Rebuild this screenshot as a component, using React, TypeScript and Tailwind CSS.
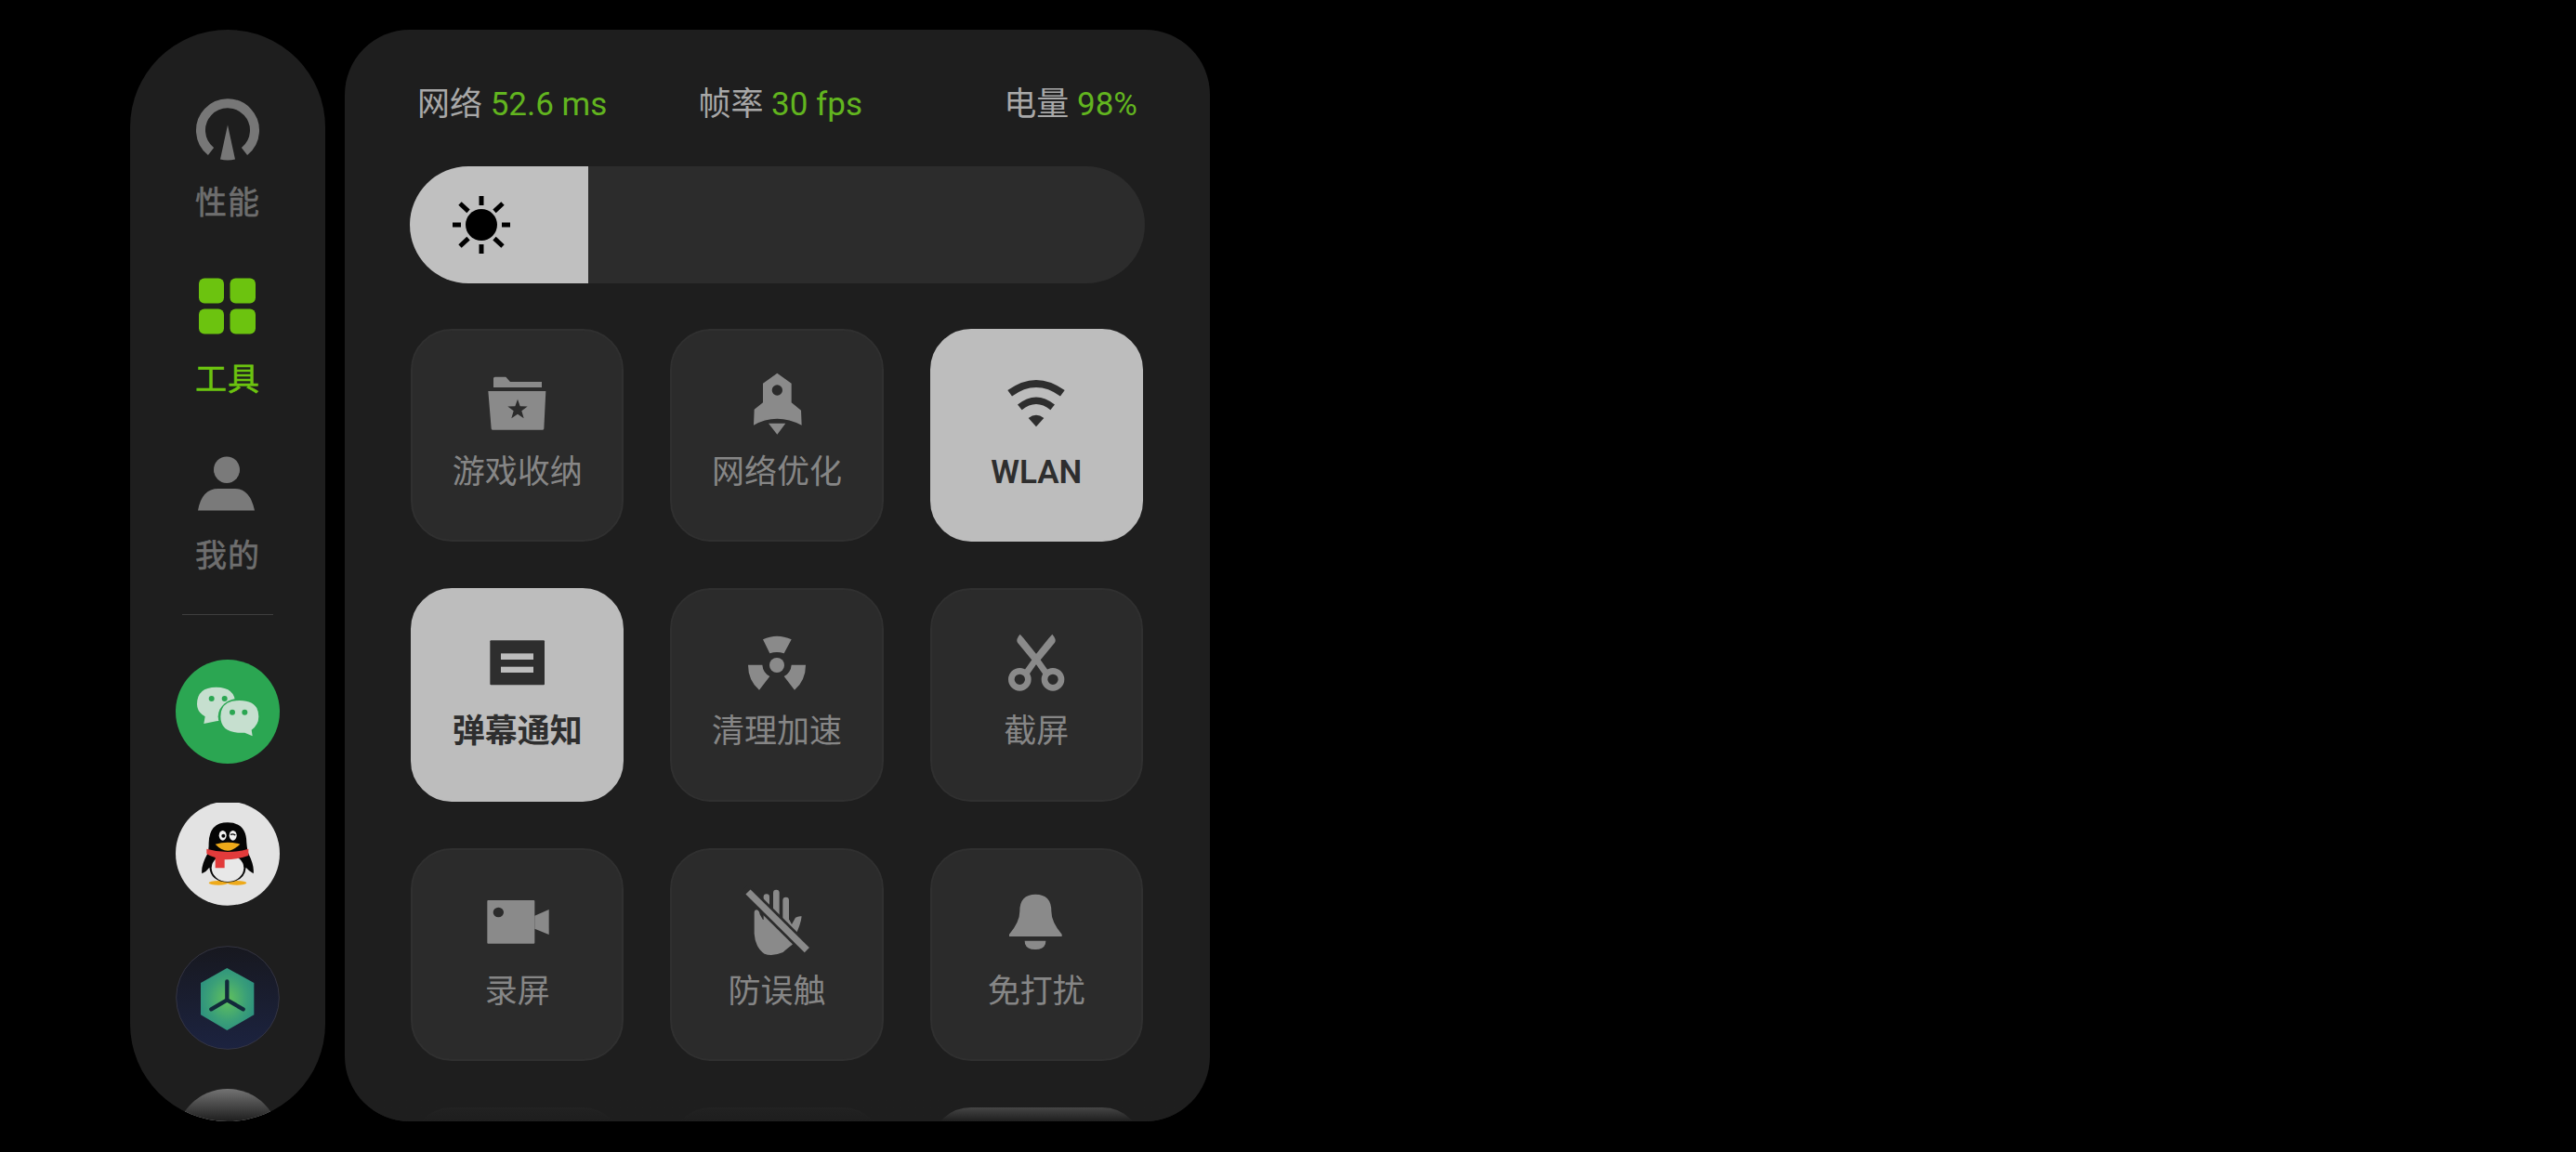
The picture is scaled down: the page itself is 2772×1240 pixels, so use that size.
import type { ReactNode } from 'react';

const TILE = '#2b2b2b';

function TileIcon({ children }: { children: ReactNode }) {
  return (
    <svg width="110" height="90" viewBox="0 0 330 270" fill="currentColor" className="shrink-0">
      {children}
    </svg>
  );
}

function FolderIcon() {
  return (
    <TileIcon>
      <path d="M87 52q0-5 5-5h35l14 16h102v18H87z" />
      <path d="M70 93H256L250 214q0 4-4 4H84q-4 0-4-4Z" />
      <polygon
        fill={TILE}
        points="165,119 173,142 197,142.5 178,157 185,180.5 165,167 145,180.5 152,157 133,142.5 157,142"
      />
    </TileIcon>
  );
}

function RocketIcon() {
  return (
    <TileIcon>
      <path d="M166 35L212 68V130L243 155L245 203Q205 182 166 182Q125 182 90 203L92 152L120 130V68Z" />
      <circle cx="166" cy="90" r="17" fill={TILE} />
      <path d="M138 197H193L166 233Z" />
    </TileIcon>
  );
}

function WifiIcon() {
  return (
    <TileIcon>
      <path d="M80 100Q165 38 250 100" fill="none" stroke="currentColor" strokeWidth="24" />
      <path d="M112 145Q165 102 218 145" fill="none" stroke="currentColor" strokeWidth="22" />
      <path d="M140 180Q165 160 190 180L165 208Z" />
    </TileIcon>
  );
}

function DanmuIcon() {
  return (
    <TileIcon>
      <rect x="76" y="61" width="176" height="144" rx="3" />
      <rect x="111" y="103" width="105" height="20" fill="#bdbdbd" />
      <rect x="111" y="146" width="105" height="19" fill="#bdbdbd" />
    </TileIcon>
  );
}

function RadiationIcon() {
  return (
    <TileIcon>
      <path d="M120 58Q165 36 212 58L188 103Q165 95 142 103Z" />
      <circle cx="165" cy="141" r="24" />
      <path d="M72 140H118Q120 165 142 177L108 221Q72 190 72 140Z" />
      <path d="M258 140H212Q210 165 188 177L222 221Q258 190 258 140Z" />
    </TileIcon>
  );
}

function ScissorsIcon() {
  return (
    <TileIcon>
      <g transform="translate(0 3)">
        <path d="M113 38L125 52L178 118L160 132L105 65Q98 55 113 38Z" />
        <path d="M217 38L205 52L152 118L170 132L225 65Q232 55 217 38Z" />
        <path d="M165 118L132 165M165 118L198 165" fill="none" stroke="currentColor" strokeWidth="20" />
        <circle cx="112" cy="184" r="27" fill="none" stroke="currentColor" strokeWidth="20" />
        <circle cx="219" cy="184" r="27" fill="none" stroke="currentColor" strokeWidth="20" />
      </g>
    </TileIcon>
  );
}

function CameraIcon() {
  return (
    <TileIcon>
      <rect x="67" y="60" width="153" height="140" rx="3" />
      <path d="M220 110L266 90V171L220 152Z" />
      <ellipse cx="103" cy="99" rx="17" ry="16" fill={TILE} />
    </TileIcon>
  );
}

function HandIcon() {
  return (
    <TileIcon>
      <g transform="translate(0 -12)">
        <rect x="122" y="52" width="19" height="90" rx="9" />
        <rect x="153" y="38" width="20" height="100" rx="10" />
        <rect x="184" y="62" width="20" height="90" rx="10" />
        <path d="M92 112Q92 103 100 103Q108 105 110 118L120 135H205L213 150L225 128Q235 122 245 124Q242 150 225 185L215 215Q195 230 185 240Q150 255 125 245Q95 225 92 180Z" />
        <path d="M60 33L274 245" stroke={TILE} strokeWidth="38" fill="none" />
        <path d="M72 45L262 233" stroke="currentColor" strokeWidth="22" fill="none" />
      </g>
    </TileIcon>
  );
}

function BellIcon() {
  return (
    <TileIcon>
      <path d="M78 177V170Q112 130 112 95Q112 41 163 41Q214 41 214 95Q214 130 248 170V177Z" />
      <path d="M128 191H196Q196 219 162 219Q128 219 128 191Z" />
    </TileIcon>
  );
}

function GaugeIcon() {
  return (
    <svg width="76" height="76" viewBox="0 0 76 76" fill="#777777">
      <path d="M20 61A29 29 0 1 1 56 61" fill="none" stroke="#777777" strokeWidth="10" />
      <path d="M38 32.5L46 69.5Q38 71.5 30 69.5Z" />
    </svg>
  );
}

function GridIcon() {
  return (
    <svg width="76" height="76" viewBox="0 0 76 76" fill="#6cc30f">
      <rect x="7" y="7.500" width="27" height="27" rx="6" />
      <rect x="40.500" y="7.500" width="27.500" height="27" rx="6" />
      <rect x="7" y="40.500" width="27" height="27" rx="6" />
      <rect x="40.500" y="40.500" width="27.500" height="27" rx="6" />
    </svg>
  );
}

function PersonIcon() {
  return (
    <svg width="76" height="76" viewBox="0 0 76 76" fill="#7a7a7a">
      <ellipse cx="37" cy="23.7" rx="14" ry="14.3" />
      <path d="M6 67.5Q10 44 28 44H46Q62 44 67 67.5Z" />
    </svg>
  );
}

function WeChatLogo() {
  return (
    <svg width="112" height="112" viewBox="27 21 336 336">
      <circle cx="195" cy="189" r="168" fill="#2ba652" />
      <path d="M118 228L122 205Q96 190 96 165Q96 110 158 110Q220 110 220 165Q220 215 158 220Z" fill="#c6dfcf" />
      <circle cx="143" cy="147" r="9" fill="#2ba652" />
      <circle cx="185" cy="147" r="9" fill="#2ba652" />
      <ellipse cx="233" cy="205" rx="69" ry="59" fill="#2ba652" />
      <path d="M275 268L250 257Q172 262 172 205Q172 153 233 153Q295 153 295 205Q295 232 272 248Z" fill="#c6dfcf" />
      <circle cx="210" cy="191" r="9" fill="#2ba652" />
      <circle cx="250" cy="191" r="9" fill="#2ba652" />
    </svg>
  );
}

function QQLogo() {
  return (
    <svg width="112" height="112" viewBox="27 21 336 336">
      <circle cx="195" cy="185" r="168" fill="#e3e3e3" />
      <ellipse cx="165" cy="280" rx="31" ry="7" fill="#eeaa1a" />
      <ellipse cx="225" cy="280" rx="31" ry="7" fill="#eeaa1a" />
      <path d="M195 85Q255 85 256 150Q258 175 262 185Q282 225 278 250Q262 240 254 230Q250 275 195 278Q140 275 136 230Q125 245 112 250Q108 225 130 185Q134 175 134 150Q136 85 195 85Z" fill="#050505" />
      <ellipse cx="195" cy="232" rx="52" ry="44" fill="#e8e8e8" />
      <path d="M127 170Q195 190 262 170V192Q225 205 185 205V232H155V198Q135 192 127 185Z" fill="#e23b3b" />
      <ellipse cx="179" cy="127" rx="12" ry="16" fill="#f2f2f2" />
      <ellipse cx="212" cy="127" rx="12" ry="16" fill="#f2f2f2" />
      <circle cx="181" cy="128" r="6" fill="#050505" />
      <path d="M204 124Q212 120 220 126" fill="none" stroke="#050505" strokeWidth="4" />
      <path d="M155 155Q195 143 235 155Q212 176 195 176Q175 176 155 155Z" fill="#eeaa1a" />
    </svg>
  );
}

function CubeLogo() {
  return (
    <svg width="112" height="112" viewBox="27 15 336 336">
      <defs>
        <linearGradient id="cube-bg" x1="0" y1="0" x2="0" y2="1">
          <stop offset="0" stopColor="#17181f" />
          <stop offset="1" stopColor="#1c2340" />
        </linearGradient>
        <radialGradient id="cube-hex" cx="0.5" cy="0.5" r="0.6">
          <stop offset="0" stopColor="#62c25c" />
          <stop offset="0.6" stopColor="#3a9f78" />
          <stop offset="1" stopColor="#2a8d80" />
        </radialGradient>
      </defs>
      <circle cx="195" cy="183" r="166" fill="url(#cube-bg)" stroke="#3a3a48" strokeWidth="2.5" />
      <polygon points="193,87 280,135 280,238 193,288 108,238 108,135" fill="url(#cube-hex)" />
      <path d="M193 130V190M193 190L142 220M193 190L245 220" fill="none" stroke="#12293a" strokeWidth="13" strokeLinecap="round" />
    </svg>
  );
}

function SunIcon() {
  return (
    <svg width="64" height="64" viewBox="0 0 64 64" fill="#000000">
      <circle cx="32" cy="32" r="17" />
      <path
        d="M32 1V11M32 53V63M1 32H10M54 32H63M18 17.300L9 9M46 17.300L55 9M18 46.700L9 55M46 46.700L55 55"
        stroke="#000000"
        strokeWidth="5"
        fill="none"
      />
    </svg>
  );
}

function NavItem({ icon, label, active }: { icon: ReactNode; label: string; active?: boolean }) {
  return (
    <div className="flex flex-col items-center">
      {icon}
      <span
        className={`mt-[20px] h-[40px] text-[34px] leading-[40px] tracking-[1px] [-webkit-text-stroke:0.6px_currentColor] ${
          active ? 'text-[#6cc30f]' : 'text-[#6e6e6e]'
        }`}
      >
        {label}
      </span>
    </div>
  );
}

function Tile({ icon, label, active }: { icon?: ReactNode; label?: string; active?: boolean }) {
  return (
    <div
      className={`flex flex-col items-center rounded-[44px] border-2 pt-[34px] ${
        active
          ? 'border-[#bdbdbd] bg-[#bdbdbd] text-[#2e2e2e]'
          : 'border-[#303030] bg-[#2b2b2b] text-[#8a8a8a]'
      }`}
    >
      {icon}
      <span className={`mt-[4px] h-[50px] text-[35px] leading-[50px] ${active ? 'font-semibold' : 'text-[#868686]'}`}>
        {label}
      </span>
    </div>
  );
}

function Stat({ name, value }: { name: string; value: string }) {
  return (
    <span className="whitespace-nowrap text-[35px] leading-[50px] text-[#a8a8a8]">
      {name} <span className="text-[#62b51f]">{value}</span>
    </span>
  );
}

export default function App() {
  return (
    <div
      className="flex h-[1240px] w-[2772px] gap-[21px] overflow-hidden bg-black pt-[32px] pl-[140px]"
      style={{ fontFamily: 'Roboto, "Noto Sans CJK SC", sans-serif' }}
    >
      {/* Left rail */}
      <aside className="relative flex h-[1175px] w-[210px] shrink-0 flex-col items-center overflow-hidden rounded-[105px] bg-[#1e1e1e] pt-[70px]">
        <div className="flex flex-col gap-[54px]">
          <NavItem icon={<GaugeIcon />} label="性能" />
          <NavItem icon={<GridIcon />} label="工具" active />
          <NavItem icon={<PersonIcon />} label="我的" />
        </div>
        <div className="mt-[43px] h-px w-[98px] shrink-0 bg-[#3e3e3e]" />
        <div className="mt-[48px] flex flex-col gap-[42px]">
          <div className="h-[112px] w-[112px] shrink-0"><WeChatLogo /></div>
          <div className="h-[112px] w-[112px] shrink-0"><QQLogo /></div>
          <div className="h-[112px] w-[112px] shrink-0"><CubeLogo /></div>
          <div className="h-[112px] w-[112px] shrink-0 rounded-full bg-[#b0b0b0]" />
        </div>
        <div className="absolute right-0 bottom-0 left-0 h-[60px] bg-gradient-to-b from-transparent to-[#1e1e1e]" />
      </aside>

      {/* Tools panel */}
      <main className="relative h-[1175px] w-[931px] shrink-0 overflow-hidden rounded-[70px] bg-[#1e1e1e] pt-[56px]">
        <div className="flex pr-[78px] pl-[78px]">
          <Stat name="网络" value="52.6 ms" />
          <div className="ml-[98px]">
            <Stat name="帧率" value="30 fps" />
          </div>
          <div className="ml-auto">
            <Stat name="电量" value="98%" />
          </div>
        </div>

        <div className="mt-[41px] ml-[70px] flex h-[126px] w-[791px] overflow-hidden rounded-[63px] bg-[#2c2c2c]">
          <div className="flex h-full w-[192px] items-center bg-[#c0c0c0] pl-[45px]">
            <SunIcon />
          </div>
        </div>

        <div className="mt-[49px] ml-[71px] grid w-[788px] grid-cols-3 auto-rows-[229.3px] gap-x-[50px] gap-y-[50px]">
          <Tile icon={<FolderIcon />} label="游戏收纳" />
          <Tile icon={<RocketIcon />} label="网络优化" />
          <Tile icon={<WifiIcon />} label="WLAN" active />
          <Tile icon={<DanmuIcon />} label="弹幕通知" active />
          <Tile icon={<RadiationIcon />} label="清理加速" />
          <Tile icon={<ScissorsIcon />} label="截屏" />
          <Tile icon={<CameraIcon />} label="录屏" />
          <Tile icon={<HandIcon />} label="防误触" />
          <Tile icon={<BellIcon />} label="免打扰" />
          <Tile />
          <Tile />
          <Tile active />
        </div>
        <div className="absolute right-0 bottom-0 left-0 h-[60px] bg-gradient-to-b from-transparent to-[#1e1e1e]" />
      </main>
    </div>
  );
}
